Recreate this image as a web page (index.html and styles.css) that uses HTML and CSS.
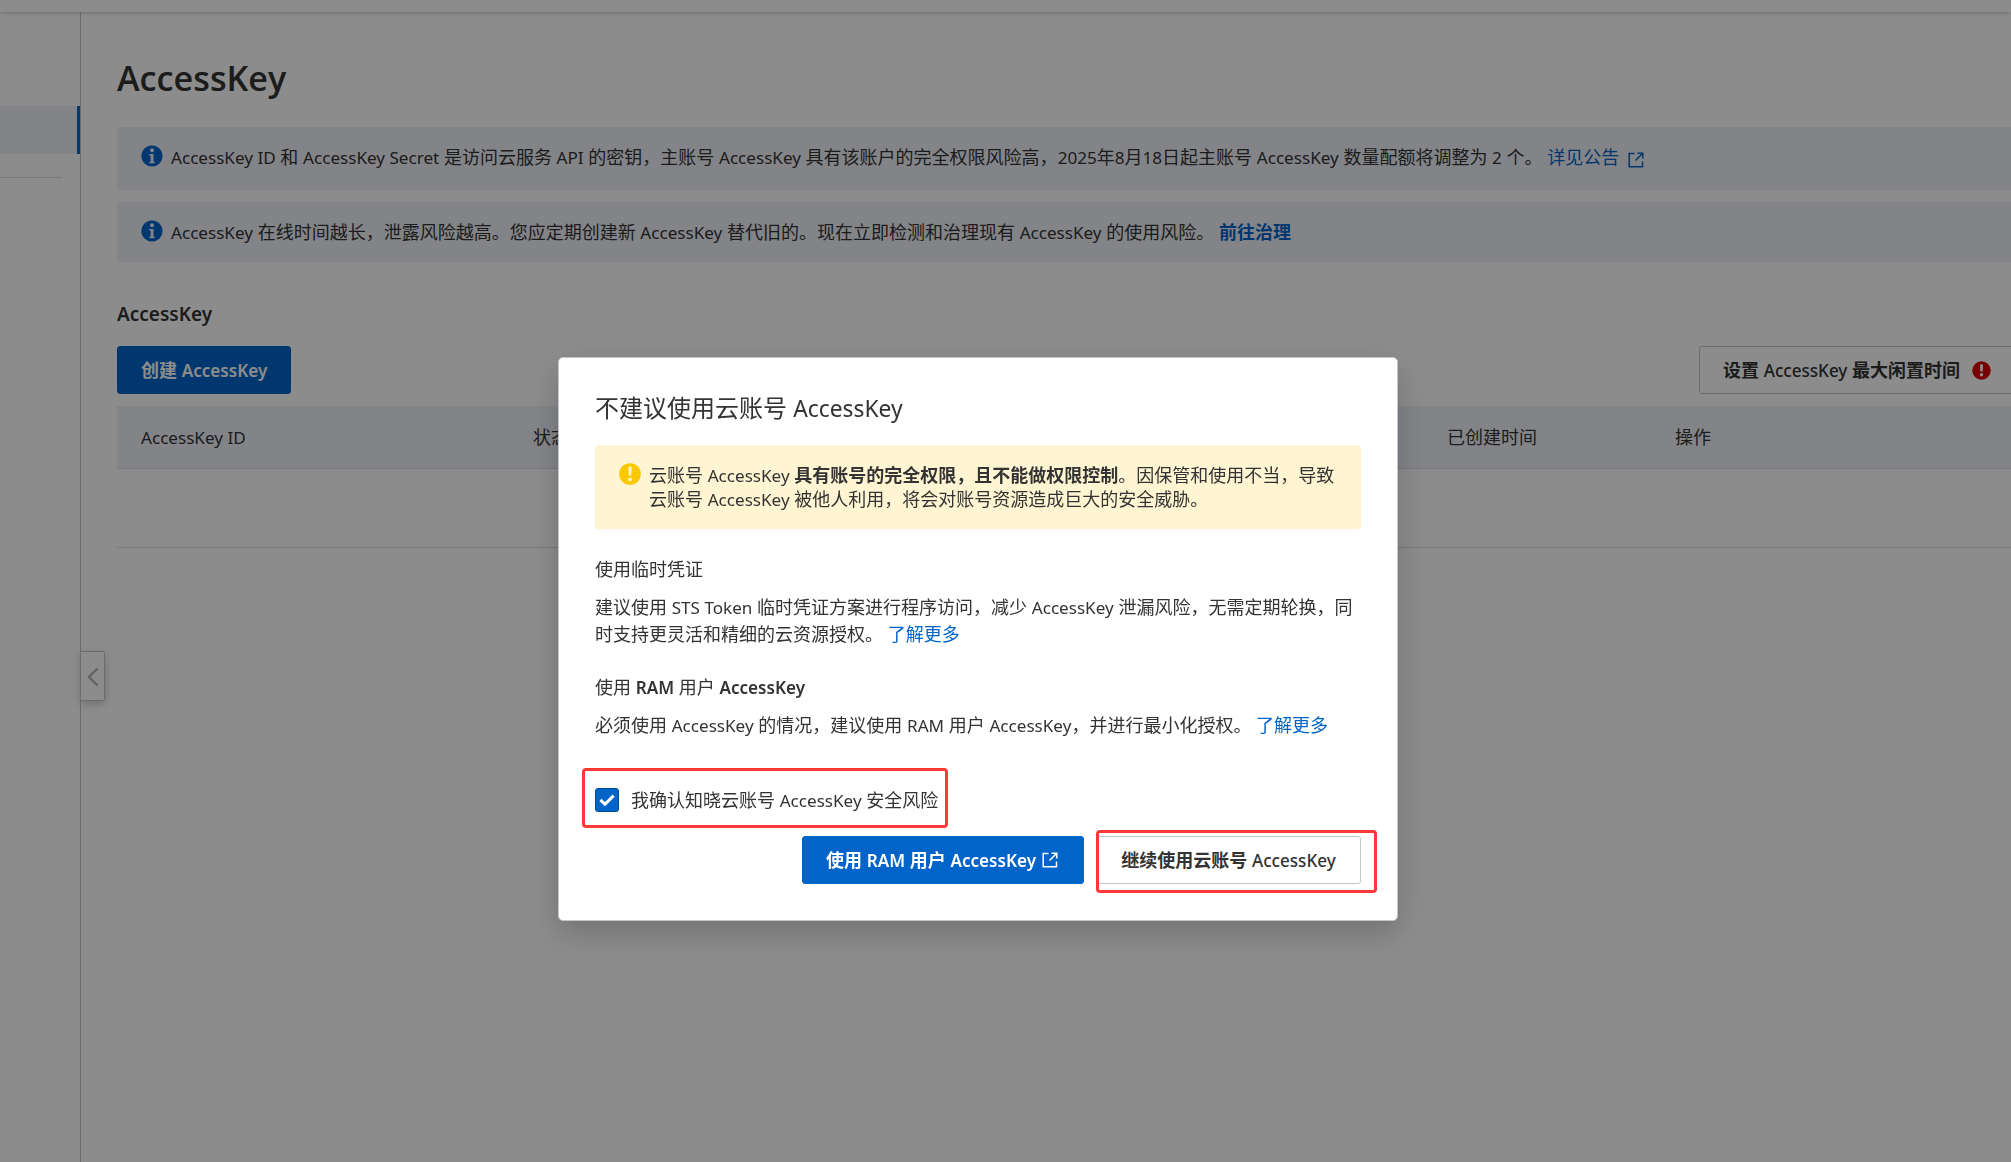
FILE: index.html
```html
<!DOCTYPE html>
<html lang="zh-CN">

<head>
    <meta charset="UTF-8">
    <meta name="viewport" content="width=device-width, initial-scale=1.0">
    <title>AccessKey</title>
    <link rel="stylesheet" href="styles.css">
</head>

<body>

    <header class="topbar"></header>
    <div class="layout">
        <aside class="sidebar">
            <div class="menu-item active"></div>
            <div class="menu-divider"></div>
            <button class="collapse">
                <svg width="12" height="20" viewBox="0 0 12 20"><path d="M10.5 1.5L2 10l8.5 8.5" fill="none" stroke="#b4b4b4" stroke-width="2.4"/></svg>
            </button>
        </aside>

        <main class="content">
            <h1><span class="en">AccessKey</span></h1>

            <div class="notice notice-first">
                <svg class="notice-icon" width="22" height="22" viewBox="0 0 22 22"><circle cx="11" cy="11" r="10.6" fill="#0064c8"/><circle cx="11" cy="5.3" r="2" fill="#eff1f8"/><path d="M8.3 8.9h4.2v7.8h1.2v1.6H8.3v-1.6h1.3v-6.2H8.3z" fill="#eff1f8"/></svg>
                <p><span class="en">AccessKey ID</span> 和 <span class="en">AccessKey Secret</span> 是访问云服务 <span class="en">API</span> 的密钥，主账号 <span class="en">AccessKey</span> 具有该账户的完全权限风险高，<span class="en">2025</span>年<span class="en">8</span>月<span class="en">18</span>日起主账号 <span class="en">AccessKey</span> 数量配额将调整为 <span class="en">2</span> 个。 <a class="link" href="#">详见公告 <svg class="ext" width="16" height="16" viewBox="0 0 16 16"><path d="M6.5 1.5H1.2v13.3h13.3V9.5M9.5 1.2h5.3v5.3M14.5 1.5L7.5 8.5" fill="none" stroke="currentColor" stroke-width="1.5"/></svg></a></p>
            </div>
            <div class="notice">
                <svg class="notice-icon" width="22" height="22" viewBox="0 0 22 22"><circle cx="11" cy="11" r="10.6" fill="#0064c8"/><circle cx="11" cy="5.3" r="2" fill="#eff1f8"/><path d="M8.3 8.9h4.2v7.8h1.2v1.6H8.3v-1.6h1.3v-6.2H8.3z" fill="#eff1f8"/></svg>
                <p><span class="en">AccessKey</span> 在线时间越长，泄露风险越高。您应定期创建新 <span class="en">AccessKey</span> 替代旧的。现在立即检测和治理现有 <span class="en">AccessKey</span> 的使用风险。 <a class="link bold" href="#">前往治理</a></p>
            </div>

            <h2><span class="en">AccessKey</span></h2>
            <div class="toolbar">
                <button class="btn btn-primary">创建 <span class="en">AccessKey</span></button>
                <button class="btn btn-idle">设置 <span class="en">AccessKey</span> 最大闲置时间
                    <svg width="19" height="19" viewBox="0 0 19 19"><circle cx="9.5" cy="9.5" r="9.2" fill="#d90000"/><path d="M7.9 3.6h3.2l-.4 6.8H8.3z" fill="#fff"/><circle cx="9.5" cy="13.7" r="1.7" fill="#fff"/></svg>
                </button>
            </div>
            <div class="table">
                <div class="table-head">
                    <span><span class="en">AccessKey ID</span></span>
                    <span>状态</span>
                    <span>已创建时间</span>
                    <span>操作</span>
                </div>
                <div class="table-empty"></div>
            </div>
        </main>
    </div>

    <div class="overlay">
        <div class="dialog">
            <h3>不建议使用云账号 <span class="en">AccessKey</span></h3>

            <div class="warning">
                <svg class="warning-icon" width="22" height="22" viewBox="0 0 22 22"><circle cx="11" cy="11" r="10.8" fill="#fac800"/><path d="M9.4 3.8h3.2l-.4 8.6H9.8z" fill="#fff5d2"/><circle cx="11" cy="16.4" r="1.8" fill="#fff5d2"/></svg>
                <p>云账号 <span class="en">AccessKey</span> <b>具有账号的完全权限，且不能做权限控制</b>。因保管和使用不当，导致<br>云账号 <span class="en">AccessKey</span> 被他人利用，将会对账号资源造成巨大的安全威胁。</p>
            </div>

            <h4>使用临时凭证</h4>
            <p class="desc desc-sts">建议使用 <span class="en">STS Token</span> 临时凭证方案进行程序访问，减少 <span class="en">AccessKey</span> 泄漏风险，无需定期轮换，同<br>时支持更灵活和精细的云资源授权。 <a class="link" href="#">了解更多</a></p>

            <h4>使用 <span class="en">RAM</span> 用户 <span class="en">AccessKey</span></h4>
            <p class="desc">必须使用 <span class="en">AccessKey</span> 的情况，建议使用 <span class="en">RAM</span> 用户 <span class="en">AccessKey</span>，并进行最小化授权。 <a class="link" href="#">了解更多</a></p>

            <label class="confirm">
                <span class="checkbox"><svg width="16" height="12" viewBox="0 0 16 12"><path d="M1.4 5.8L6 10.2 14.6 1.6" fill="none" stroke="#fff" stroke-width="3"/></svg></span>
                <span>我确认知晓云账号 <span class="en">AccessKey</span> 安全风险</span>
            </label>

            <div class="actions">
                <button class="btn btn-primary btn-ram">使用 <span class="en">RAM</span> 用户 <span class="en">AccessKey</span> <svg class="ext" width="16" height="16" viewBox="0 0 16 16"><path d="M6.5 1.5H1.2v13.3h13.3V9.5M9.5 1.2h5.3v5.3M14.5 1.5L7.5 8.5" fill="none" stroke="currentColor" stroke-width="1.5"/></svg></button>
                <button class="btn btn-continue">继续使用云账号 <span class="en">AccessKey</span></button>
            </div>

            <div class="mark mark-confirm"></div>
            <div class="mark mark-continue"></div>
        </div>
    </div>

</body>

</html>
```

FILE: styles.css
```css
* {
    box-sizing: border-box;
}

body {
    margin: 0;
    height: 100vh;
    overflow: hidden;
    display: flex;
    flex-direction: column;
    background-color: #fff;
    color: #333;
    font-family: "Noto Sans", "Noto Sans CJK SC", sans-serif;
    font-size: 18px;
    line-height: 24px;
    white-space: nowrap;
}

h1,
h2,
h3,
h4,
p {
    margin: 0;
}

/* latin words run a bit wide next to the chinese text */
.en {
    font-size: 0.95em;
    line-height: 0;
}

.link {
    color: #0064c8;
    text-decoration: none;
}

.bold {
    font-weight: 700;
}

.topbar {
    flex: none;
    height: 12px;
    background-color: #fff;
    box-shadow: 0 1px 4px rgba(0, 0, 0, 0.2);
    z-index: 1;
}

.layout {
    flex: 1;
    display: flex;
    min-height: 0;
}

.sidebar {
    position: relative;
    flex: none;
    width: 81px;
    padding-top: 94px;
    border-right: 1px solid #c0c6cc;
}

.menu-item {
    height: 48px;
}

.menu-item.active {
    background-color: #eff1f8;
    border-right: 3px solid #0064c8;
}

.menu-divider {
    width: 62px;
    margin-top: 23px;
    border-top: 1px solid #dcdcdc;
}

.collapse {
    position: absolute;
    left: 80px;
    top: 639px;
    width: 25px;
    height: 50px;
    padding: 4px 0 0;
    border: 1px solid #c0c6cc;
    border-radius: 0 2px 2px 0;
    background-color: #fff;
    box-shadow: 0 3px 8px rgba(0, 0, 0, 0.2);
}

.content {
    flex: none;
    width: 1980px;
    padding: 42px 0 0 36px;
}

h1 {
    height: 73px;
    font-family: "Open Sans", sans-serif;
    font-size: 36px;
    font-weight: 600;
    line-height: 48px;
}

.notice {
    display: flex;
    gap: 8px;
    height: 60px;
    padding: 18px 24px;
    border-radius: 3px;
    background-color: #eff1f8;
}

.notice-first {
    height: 63px;
    margin-bottom: 12px;
}

.notice-icon {
    flex: none;
}

.ext {
    vertical-align: -2px;
}

.notice .ext {
    margin-left: 4px;
    vertical-align: -4px;
}

h2 {
    margin-top: 40px;
    height: 44px;
    font-size: 20px;
    font-weight: 600;
}

.toolbar {
    display: flex;
    justify-content: space-between;
    margin-bottom: 12px;
}

.btn {
    height: 48px;
    padding: 0 23px 2px;
    border: 1px solid #c0c6cc;
    border-radius: 3px;
    background-color: #fff;
    color: #333;
    font-family: inherit;
    font-size: 18px;
    font-weight: 700;
    white-space: nowrap;
}

.btn .en {
    font-weight: 500;
}

.btn-primary {
    border-color: #0064c8;
    background-color: #0064c8;
    color: #fff;
}

.btn-primary .en {
    font-weight: 600;
}

.btn-idle {
    width: 362px;
    text-align: left;
}

.btn-idle svg {
    margin-left: 7px;
    vertical-align: -3px;
}

.table-head {
    display: grid;
    grid-template-columns: 392px 914px 228px 1fr;
    align-items: center;
    height: 63px;
    padding-left: 24px;
    border-bottom: 1px solid #dcdcdc;
    background-color: #eff1f8;
}

.table-empty {
    height: 79px;
    border-bottom: 1px solid #dcdcdc;
}

.overlay {
    position: fixed;
    inset: 0;
    z-index: 10;
    padding: 357px 0 0 558px;
    background-color: rgba(0, 0, 0, 0.45);
}

.dialog {
    position: relative;
    width: 840px;
    height: 564px;
    padding: 35px 36px 0;
    border: 1px solid #c0c6cc;
    border-radius: 5px;
    background-color: #fff;
    box-shadow: 0 12px 32px rgba(0, 0, 0, 0.2);
}

h3 {
    height: 52px;
    font-size: 24px;
    font-weight: 400;
    line-height: 30px;
}

.warning {
    display: flex;
    gap: 8px;
    height: 84px;
    margin-bottom: 28px;
    padding: 18px 24px;
    border-radius: 3px;
    background-color: #fff5d2;
}

.warning-icon {
    flex: none;
}

h4 {
    font-size: 18px;
    font-weight: 400;
    margin-bottom: 13px;
}

h4 .en {
    font-weight: 600;
}

.desc {
    line-height: 27px;
}

.desc-sts {
    margin-bottom: 27px;
}

.confirm {
    display: flex;
    align-items: center;
    gap: 12px;
    margin: 49px 0 24px;
}

.checkbox {
    display: flex;
    align-items: center;
    justify-content: center;
    width: 24px;
    height: 24px;
    border: 1px solid #004b96;
    border-radius: 3px;
    background-color: #0064c8;
}

.actions {
    display: flex;
    justify-content: flex-end;
    gap: 12px;
}

.btn-ram {
    width: 282px;
    text-align: left;
}

.btn-ram .ext {
    margin-left: 1px;
    vertical-align: -1px;
}

.btn-continue {
    width: 265px;
}

/* red frames drawn over the dialog */
.mark {
    position: absolute;
    border: 3px solid #ff3838;
    border-radius: 4px;
}

.mark-confirm {
    left: 23px;
    top: 410px;
    width: 366px;
    height: 60px;
}

.mark-continue {
    left: 537px;
    top: 472px;
    width: 281px;
    height: 63px;
}
```
